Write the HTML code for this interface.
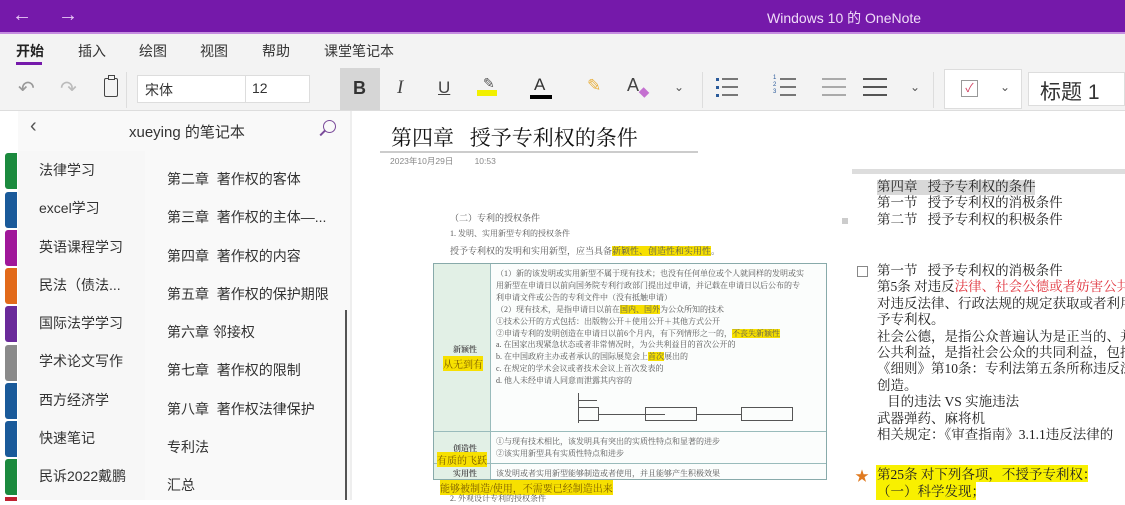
<!DOCTYPE html>
<html><head><meta charset="utf-8"><style>
*{margin:0;padding:0;box-sizing:border-box}
body{width:1125px;height:500px;overflow:hidden;background:#fff;position:relative;font-family:"Liberation Sans","Noto Sans CJK SC",sans-serif;color:#222}
.a{position:absolute}
.serif{font-family:"Liberation Serif","Noto Serif CJK SC",serif}
.tb{font-size:13px;color:#333}
.small{font-family:"Liberation Serif","Noto Serif CJK SC",serif;font-size:8px;color:#555;white-space:nowrap}
.hl{background:#f7e000}
.li{position:absolute;width:6px;height:2px;background:#2a5a9a}
</style></head><body>
<div class="a" style="left:0;top:0;width:1125px;height:33px;background:#7519aa"></div>
<div class="a" style="left:0;top:32px;width:1125px;height:2px;background:#c58de0"></div>
<div class="a" style="left:12px;top:4px;color:#e8c8f5;font-size:20px">&#8592;</div>
<div class="a" style="left:58px;top:4px;color:#e8c8f5;font-size:20px">&#8594;</div>
<div class="a" style="left:767px;top:8px;color:#f0dcf8;font-size:14px">Windows 10 的 OneNote</div>
<div class="a" style="left:0;top:34px;width:1125px;height:77px;background:#f3f3f3"></div>
<div class="a tb" style="left:16px;top:41px;font-size:14px;color:#222;font-weight:bold">开始</div>
<div class="a" style="left:16px;top:62px;width:26px;height:3px;background:#7519aa"></div>
<div class="a tb" style="left:78px;top:41px;font-size:14px">插入</div>
<div class="a tb" style="left:139px;top:41px;font-size:14px">绘图</div>
<div class="a tb" style="left:200px;top:41px;font-size:14px">视图</div>
<div class="a tb" style="left:262px;top:41px;font-size:14px">帮助</div>
<div class="a tb" style="left:324px;top:41px;font-size:14px">课堂笔记本</div>
<div class="a" style="left:18px;top:76px;color:#999;font-size:20px">&#8630;</div>
<div class="a" style="left:60px;top:76px;color:#bbb;font-size:20px">&#8631;</div>
<div class="a" style="left:104px;top:78px;width:14px;height:19px;border:1.5px solid #444;border-radius:2px"></div>
<div class="a" style="left:108px;top:75px;width:7px;height:5px;border:1.5px solid #444;background:#f3f3f3"></div>
<div class="a" style="left:126px;top:72px;width:1px;height:36px;background:#ddd"></div>
<div class="a" style="left:137px;top:75px;width:173px;height:28px;background:#fff;border:1px solid #ddd"></div>
<div class="a" style="left:245px;top:76px;width:1px;height:26px;background:#ddd"></div>
<div class="a tb" style="left:145px;top:80px;font-size:14px">宋体</div>
<div class="a tb" style="left:252px;top:80px;font-size:14px">12</div>
<div class="a" style="left:340px;top:68px;width:40px;height:42px;background:#d6d6d6"></div>
<div class="a" style="left:353px;top:78px;font-size:18px;font-weight:bold;color:#333">B</div>
<div class="a serif" style="left:397px;top:77px;font-size:19px;font-style:italic;color:#444">I</div>
<div class="a" style="left:438px;top:78px;font-size:17px;text-decoration:underline;color:#444">U</div>
<div class="a" style="left:477px;top:90px;width:20px;height:6px;background:#f2f000"></div>
<div class="a" style="left:483px;top:75px;font-size:14px;color:#555">&#9998;</div>
<div class="a" style="left:534px;top:75px;font-size:17px;color:#333">A</div>
<div class="a" style="left:530px;top:95px;width:22px;height:4px;background:#000"></div>
<div class="a" style="left:587px;top:76px;font-size:17px;color:#e8b040">&#9998;</div>
<div class="a" style="left:627px;top:75px;font-size:18px;color:#444">A</div>
<div class="a" style="left:640px;top:89px;width:8px;height:7px;background:#c470d0;transform:rotate(45deg)"></div>
<div class="a" style="left:674px;top:80px;font-size:12px;color:#555">&#8964;</div>
<div class="a" style="left:702px;top:72px;width:1px;height:36px;background:#ddd"></div>
<div class="a" style="left:722px;top:78px;width:16px;height:20px;background:linear-gradient(#777 0 2px,transparent 2px 8px,#777 8px 10px,transparent 10px 16px,#777 16px 18px,transparent 18px)"></div>
<div class="a" style="left:716px;top:78px;width:3px;height:20px;background:linear-gradient(#2a5a9a 0 3px,transparent 3px 8px,#2a5a9a 8px 11px,transparent 11px 16px,#2a5a9a 16px 19px,transparent 19px)"></div>
<div class="a" style="left:780px;top:78px;width:16px;height:20px;background:linear-gradient(#777 0 2px,transparent 2px 8px,#777 8px 10px,transparent 10px 16px,#777 16px 18px,transparent 18px)"></div>
<div class="a" style="left:773px;top:75px;font-size:6px;line-height:7px;color:#2a5a9a">1<br>2<br>3</div>
<div class="a" style="left:822px;top:78px;width:24px;height:20px;background:linear-gradient(#aaa 0 2px,transparent 2px 8px,#aaa 8px 10px,transparent 10px 16px,#aaa 16px 18px,transparent 18px)"></div>
<div class="a" style="left:863px;top:78px;width:24px;height:20px;background:linear-gradient(#555 0 2px,transparent 2px 8px,#555 8px 10px,transparent 10px 16px,#555 16px 18px,transparent 18px)"></div>
<div class="a" style="left:910px;top:80px;font-size:12px;color:#555">&#8964;</div>
<div class="a" style="left:933px;top:72px;width:1px;height:36px;background:#ddd"></div>
<div class="a" style="left:944px;top:69px;width:78px;height:40px;background:#fff;border:1px solid #ddd"></div>
<div class="a" style="left:961px;top:80px;width:17px;height:17px;border:1px solid #999;color:#d04060;font-size:12px;line-height:15px;text-align:center">&#10003;</div>
<div class="a" style="left:1000px;top:80px;font-size:12px;color:#555">&#8964;</div>
<div class="a" style="left:1028px;top:72px;width:97px;height:34px;background:#fff;border:1px solid #ddd"></div>
<div class="a" style="left:1040px;top:76px;font-size:21px;color:#333">标题 1</div>
<div class="a" style="left:0;top:110px;width:1125px;height:1px;background:#ddd"></div>
<div class="a" style="left:0;top:111px;width:352px;height:389px;background:#f7f7f7"></div>
<div class="a" style="left:0;top:111px;width:18px;height:389px;background:#fff"></div>
<div class="a" style="left:18px;top:111px;width:334px;height:40px;background:#f9f9f9"></div>
<div class="a" style="left:30px;top:115px;font-size:20px;color:#555">&#8249;</div>
<div class="a" style="left:129px;top:121px;font-size:15px;color:#333">xueying 的笔记本</div>
<div class="a" style="left:323px;top:120px;width:13px;height:13px;border:1.5px solid #7a4a9a;border-radius:50%"></div>
<div class="a" style="left:319px;top:132px;width:7px;height:1.5px;background:#7a4a9a;transform:rotate(-45deg)"></div>
<div class="a" style="left:145px;top:151px;width:207px;height:349px;background:#f9f9f9"></div>
<div class="a" style="left:345px;top:310px;width:2px;height:190px;background:#555"></div>
<div class="a" style="left:350px;top:111px;width:2px;height:389px;background:#eee"></div>
<div class="a" style="left:5px;top:153px;width:12px;height:36px;background:#1b8a3e;border-radius:3px 0 0 3px"></div>
<div class="a" style="left:5px;top:192px;width:12px;height:36px;background:#1a5a9a;border-radius:3px 0 0 3px"></div>
<div class="a" style="left:5px;top:230px;width:12px;height:36px;background:#a0179a;border-radius:3px 0 0 3px"></div>
<div class="a" style="left:5px;top:268px;width:12px;height:36px;background:#e26a1a;border-radius:3px 0 0 3px"></div>
<div class="a" style="left:5px;top:306px;width:12px;height:36px;background:#6a2a9a;border-radius:3px 0 0 3px"></div>
<div class="a" style="left:5px;top:345px;width:12px;height:36px;background:#8a8a8a;border-radius:3px 0 0 3px"></div>
<div class="a" style="left:5px;top:383px;width:12px;height:36px;background:#1a5a9a;border-radius:3px 0 0 3px"></div>
<div class="a" style="left:5px;top:421px;width:12px;height:36px;background:#1a5a9a;border-radius:3px 0 0 3px"></div>
<div class="a" style="left:5px;top:459px;width:12px;height:36px;background:#1b8a3e;border-radius:3px 0 0 3px"></div>
<div class="a" style="left:5px;top:497px;width:12px;height:4px;background:#c02030"></div>
<div class="a" style="font-size:14px;color:#333;left:39px;top:151px;line-height:38.3px">法律学习<br>excel学习<br>英语课程学习<br>民法（债法...<br>国际法学学习<br>学术论文写作<br>西方经济学<br>快速笔记<br>民诉2022戴鹏</div>
<div class="a" style="font-size:14px;color:#333;left:167px;top:160px;line-height:38.3px">第二章&nbsp; 著作权的客体<br>第三章&nbsp; 著作权的主体—...<br>第四章&nbsp; 著作权的内容<br>第五章&nbsp; 著作权的保护期限<br>第六章 邻接权<br>第七章&nbsp; 著作权的限制<br>第八章&nbsp; 著作权法律保护<br>专利法<br>汇总</div>
<div class="a serif" style="left:391px;top:122px;font-size:21px;color:#111">第四章&nbsp;&nbsp;&nbsp;授予专利权的条件</div>
<div class="a" style="left:380px;top:151px;width:318px;height:2px;background:#ccc"></div>
<div class="a" style="left:390px;top:155px;font-size:8.5px;color:#888">2023年10月29日&nbsp;&nbsp;&nbsp;&nbsp;&nbsp;&nbsp;&nbsp;&nbsp;&nbsp;10:53</div>
<div class="a small" style="left:450px;top:211px;font-size:9px;color:#555">（二）专利的授权条件</div>
<div class="a small" style="left:450px;top:228px">1. 发明、实用新型专利的授权条件</div>
<div class="a small" style="left:450px;top:244px;font-size:9px">授予专利权的发明和实用新型，应当具备<span class="hl">新颖性、创造性和实用性</span>。</div>
<div class="a" style="left:433px;top:263px;width:394px;height:217px;border:1px solid #8aa;background:#fbfdfc"></div>
<div class="a" style="left:434px;top:264px;width:57px;height:215px;background:#e2f0e6;border-right:1px solid #9bb"></div>
<div class="a" style="left:434px;top:431px;width:392px;height:1px;background:#9bb"></div>
<div class="a" style="left:434px;top:463px;width:392px;height:1px;background:#9bb"></div>
<div class="a small" style="left:453px;top:344px;font-weight:bold">新颖性</div>
<div class="a small hl" style="left:443px;top:356px;font-size:10px;color:#7a5a00">从无到有</div>
<div class="a small" style="left:453px;top:443px;font-weight:bold">创造性</div>
<div class="a small hl" style="left:437px;top:452px;font-size:10px;color:#7a5a00">有质的飞跃</div>
<div class="a small" style="left:453px;top:468px;font-weight:bold">实用性</div>
<div class="a small" style="left:496px;top:268px;line-height:11.9px">（1）新的该发明或实用新型不属于现有技术；也没有任何单位或个人就同样的发明或实<br>用新型在申请日以前向国务院专利行政部门提出过申请，并记载在申请日以后公布的专<br>利申请文件或公告的专利文件中（没有抵触申请）<br>（2）现有技术，是指申请日以前在<span class="hl">国内、国外</span>为公众所知的技术<br>①技术公开的方式包括：出版物公开＋使用公开＋其他方式公开<br>②申请专利的发明创造在申请日以前6个月内，有下列情形之一的，<span class="hl">不丧失新颖性</span><br>a. 在国家出现紧急状态或者非常情况时，为公共利益目的首次公开的<br>b. 在中国政府主办或者承认的国际展览会上<span class="hl">首次</span>展出的<br>c. 在规定的学术会议或者技术会议上首次发表的<br>d. 他人未经申请人同意而泄露其内容的</div>
<div class="a" style="left:578px;top:400px;width:19px;height:1px;background:#555"></div>
<div class="a" style="left:578px;top:393px;width:1px;height:30px;background:#555"></div>
<div class="a" style="left:578px;top:407px;width:21px;height:14px;border:1px solid #555"></div>
<div class="a" style="left:599px;top:414px;width:66px;height:1px;background:#555"></div>
<div class="a" style="left:645px;top:407px;width:52px;height:14px;border:1px solid #555"></div>
<div class="a" style="left:697px;top:414px;width:44px;height:1px;background:#555"></div>
<div class="a" style="left:741px;top:407px;width:52px;height:14px;border:1px solid #555"></div>
<div class="a small" style="left:496px;top:436px;line-height:12px">①与现有技术相比，该发明具有突出的实质性特点和显著的进步<br>②该实用新型具有实质性特点和进步</div>
<div class="a small" style="left:496px;top:468px">该发明或者实用新型能够制造或者使用，并且能够产生积极效果</div>
<div class="a small hl" style="left:440px;top:480px;font-size:10px;color:#7a5a00">能够被制造/使用，不需要已经制造出来</div>
<div class="a small" style="left:450px;top:493px">2. 外观设计专利的授权条件</div>
<div class="a" style="left:852px;top:169px;width:273px;height:5px;background:#ddd"></div>
<div class="a" style="left:877px;top:180px;width:158px;height:15px;background:#d8d8d8"></div>
<div class="a serif" style="left:877px;top:179px;font-size:13.5px;line-height:16.3px;color:#222;white-space:nowrap">第四章&nbsp;&nbsp;&nbsp;授予专利权的条件<br>第一节&nbsp;&nbsp;&nbsp;授予专利权的消极条件<br>第二节&nbsp;&nbsp;&nbsp;授予专利权的积极条件</div>
<div class="a" style="left:842px;top:218px;width:6px;height:6px;background:#ccc"></div>
<div class="a" style="left:857px;top:266px;width:11px;height:11px;border:1px solid #888"></div>
<div class="a serif" style="left:877px;top:263px;font-size:13.5px;line-height:16.4px;color:#222;white-space:nowrap">第一节&nbsp;&nbsp;&nbsp;授予专利权的消极条件<br>第5条&nbsp;对违反<span style="color:#e0303a">法律、社会公德或者妨害公共</span><br>对违反法律、行政法规的规定获取或者利用<br>予专利权。<br>社会公德，是指公众普遍认为是正当的、并<br>公共利益，是指社会公众的共同利益，包括<br>《细则》第10条：专利法第五条所称违反法<br>创造。<br>&nbsp;&nbsp;&nbsp;目的违法&nbsp;VS&nbsp;实施违法<br>武器弹药、麻将机<br>相关规定：《审查指南》3.1.1违反法律的</div>
<div class="a" style="left:855px;top:466px;color:#e07a20;font-size:14px">&#9733;</div>
<div class="a" style="left:876px;top:465px;width:212px;height:17px;background:#f8f000"></div>
<div class="a" style="left:876px;top:482px;width:100px;height:18px;background:#f8f000"></div>
<div class="a serif" style="left:877px;top:466px;font-size:13.5px;line-height:17px;color:#222;white-space:nowrap">第25条&nbsp;对下列各项，不授予专利权：<br>（一）科学发现；</div>
</body></html>
